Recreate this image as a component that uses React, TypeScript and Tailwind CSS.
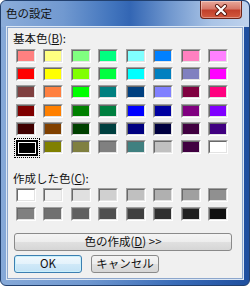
import React from "react";

const basic = [
  ["#FF8080", "#FFFF80", "#80FF80", "#00FF80", "#80FFFF", "#0080FF", "#FF80C0", "#FF80FF"],
  ["#FF0000", "#FFFF00", "#80FF00", "#00FF40", "#00FFFF", "#0080C0", "#8080C0", "#FF00FF"],
  ["#804040", "#FF8040", "#00FF00", "#008080", "#004080", "#8080FF", "#800040", "#FF0080"],
  ["#800000", "#FF8000", "#008000", "#008040", "#0000FF", "#0000A0", "#800080", "#8000FF"],
  ["#400000", "#804000", "#004000", "#004040", "#000080", "#000040", "#400040", "#400080"],
  ["#000000", "#808000", "#808040", "#808080", "#408080", "#C0C0C0", "#400040", "#FFFFFF"],
];

const custom = [
  ["#FFFFFF", "#F0F0F0", "#E0E0E0", "#D0D0D0", "#C0C0C0", "#B0B0B0", "#A0A0A0", "#909090"],
  ["#808080", "#707070", "#606060", "#505050", "#404040", "#303030", "#202020", "#101010"],
];

function Swatch({ color, selected }: { color: string; selected?: boolean }) {
  return (
    <div className="relative h-[14px] w-[20px] border border-t-[#a0a0a0] border-l-[#a0a0a0] border-r-white border-b-white">
      <div
        className="h-full w-full border border-t-[#696969] border-l-[#696969] border-r-[#e3e3e3] border-b-[#e3e3e3]"
        style={{ backgroundColor: color }}
      />
      {selected && (
        <div className="absolute -left-[3px] -top-[3px] h-[20px] w-[26px] border border-dotted border-black p-[1px]">
          <div className="h-full w-full border-2 border-black">
            <div className="h-full w-full border border-white bg-black" />
          </div>
        </div>
      )}
    </div>
  );
}

export default function App() {
  return (
    <div className="h-[286px] w-[250px] bg-white font-['Noto_Sans_CJK_JP','Liberation_Sans',sans-serif] text-[#111]">
      <div className="flex h-full w-full flex-col rounded-[6px] border border-[#22406e] bg-[linear-gradient(to_right,#86a9d8_0%,#6f97cf_35%,#3a6cb8_70%,#1f4f9f_100%)]">
        {/* title bar */}
        <div className="flex h-[26px] items-start justify-between rounded-t-[6px] bg-[linear-gradient(to_right,#8cadda_0%,#7199d0_25%,#4174bd_45%,#3366b4_52%,#7097ce_68%,#aac4e6_85%,#bed2ed_100%)]">
          <span className="ml-[5px] mt-[5px] text-[11.5px] leading-[15px]">色の設定</span>
          <div className="mr-[7px] flex h-[18px] w-[42px] items-center justify-center rounded-b-[4px] border border-t-0 border-[#6e2418] bg-[linear-gradient(to_bottom,#e9a99b_0%,#d7796a_45%,#c2402b_55%,#d25a3f_100%)] shadow-[inset_0_0_0_1px_rgba(255,255,255,0.35)]">
            <svg width="14" height="12" viewBox="0 0 14 12">
              <path d="M3 2 L11 10 M11 2 L3 10" stroke="#5b1a10" strokeWidth="4" strokeLinecap="round" />
              <path d="M3 2 L11 10 M11 2 L3 10" stroke="#ffffff" strokeWidth="2.2" strokeLinecap="round" />
            </svg>
          </div>
        </div>

        {/* client area */}
        <div className="mx-[6px] mb-[6px] flex-1 border border-[#8ca6cc] bg-[#f0f0f0] shadow-[0_0_0_1px_#dce7f4]">
          <div className="ml-[5px] mt-[3px] text-[11.5px] leading-[15px]">
            基本色(<span className="underline">B</span>):
          </div>
          <div className="ml-[8px] mt-[3px] grid w-[212px] grid-cols-[repeat(8,20px)] justify-between gap-y-[4.2px]">
            {basic.flat().map((c, i) => (
              <Swatch key={i} color={c} selected={i === 40} />
            ))}
          </div>

          <div className="ml-[5px] mt-[17px] text-[11.5px] leading-[15px]">
            作成した色(<span className="underline">C</span>):
          </div>
          <div className="ml-[8px] mt-[2px] grid w-[212px] grid-cols-[repeat(8,20px)] justify-between gap-y-[5px]">
            {custom.flat().map((c, i) => (
              <Swatch key={i} color={c} />
            ))}
          </div>

          <button
            type="button"
            className="ml-[6px] mt-[12px] flex h-[18px] w-[218px] items-center justify-center rounded-[3px] border border-[#8a8a8a] bg-[linear-gradient(to_bottom,#f4f4f4_0%,#ededed_50%,#e0e0e0_50%,#d6d6d6_100%)] text-[11.5px] leading-none"
          >
            色の作成(<span className="underline">D</span>) &gt;&gt;
          </button>

          <div className="ml-[6px] mt-[4px] flex gap-[9px]">
            <button
              type="button"
              className="flex h-[18px] w-[68px] items-center justify-center rounded-[3px] border border-[#3c7fb1] bg-[linear-gradient(to_bottom,#f0f8fd_0%,#e3f2fb_50%,#d0e9f8_50%,#c3e2f5_100%)] text-[11.5px] leading-none shadow-[inset_0_0_0_1px_#c8f0fc]"
            >
              OK
            </button>
            <button
              type="button"
              className="flex h-[18px] w-[68px] items-center justify-center rounded-[3px] border border-[#8a8a8a] bg-[linear-gradient(to_bottom,#f4f4f4_0%,#ededed_50%,#e0e0e0_50%,#d6d6d6_100%)] text-[11.5px] leading-none"
            >
              キャンセル
            </button>
          </div>
        </div>
      </div>
    </div>
  );
}
